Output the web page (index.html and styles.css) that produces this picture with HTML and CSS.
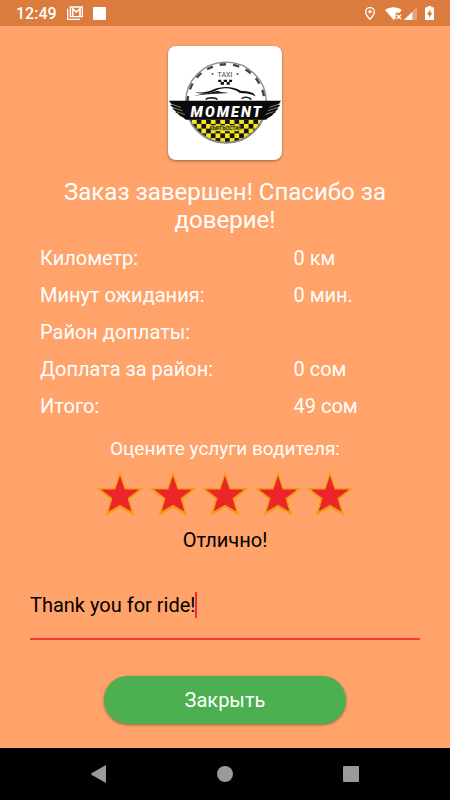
FILE: index.html
```html
<!DOCTYPE html>
<html lang="ru">
  <head>
    <meta charset="UTF-8" />
    <meta name="viewport" content="width=device-width, initial-scale=1.0" />
    <title>Заказ завершен</title>
    <link rel="stylesheet" href="styles.css">
  </head>

  <body>
    <header class="status-bar">
      <div class="status-group">
        <span class="clock">12:49</span>
        <!-- mail -->
        <svg class="mail-icon" viewBox="0 0 48 42" fill="none" stroke="#fff">
          <path d="M2 8v32h37" stroke-width="4" />
          <path d="M10 3h36v29H10z" stroke-width="4" />
          <path d="M17 32V8l11 10L39 8v24" stroke-width="5" />
        </svg>
        <span class="square-icon"></span>
      </div>
      <div class="status-group status-right">
        <!-- location -->
        <svg class="pin-icon" viewBox="0 0 30 39">
          <path d="M15 2C8 2 2 7 2 14c0 9 13 23 13 23s13-14 13-23C28 7 22 2 15 2z" fill="none" stroke="#fff" stroke-width="4" />
          <circle cx="15" cy="14" r="5" fill="#fff" />
        </svg>
        <!-- wifi -->
        <svg class="wifi-icon" viewBox="0 0 51 39">
          <path d="M0 9C14-2 37-2 50 9L44 17H32v17l-6 5z" fill="#fff" />
          <path d="M35 23l13 13M48 23L35 36" stroke="#fff" stroke-width="4" />
        </svg>
        <!-- signal -->
        <svg class="signal-icon" viewBox="0 0 39 39">
          <path d="M0 39L39 0v39z" fill="#fff" fill-opacity=".3" />
          <path d="M0 39l25-25v25z" fill="#fff" />
        </svg>
        <!-- battery -->
        <svg class="battery-icon" viewBox="0 0 27 42">
          <path d="M8 0h11v4h6q2 0 2 2v34q0 2-2 2H2q-2 0-2-2V6q0-2 2-2h6z" fill="#fff" />
          <path d="M16 9L6 26h6v11l10-17h-6z" fill="#db7b3e" />
        </svg>
      </div>
    </header>

    <main class="content">
      <svg class="logo" viewBox="25 25 338 338" role="img" aria-label="Taxi Moment">
        <defs>
          <pattern id="checks" x="96" y="242" width="28" height="28" patternUnits="userSpaceOnUse">
            <rect width="28" height="28" fill="#f7e71c" />
            <path d="M14 0h14v14H14zM0 14h14v14H0z" fill="#151515" />
          </pattern>
        </defs>
        <!-- wheel -->
        <circle cx="197" cy="193" r="120" fill="none" stroke="#888" stroke-width="4" />
        <circle cx="197" cy="193" r="114" fill="none" stroke="#444" stroke-width="7" stroke-dasharray="19 20.800" />
        <path d="M89 242a119 119 0 0 0 216 0z" fill="url(#checks)" stroke="#888" stroke-width="4" />
        <path d="M152 260h88v18h-88z" fill="#d8cc22" />
        <text class="logo-city" x="196" y="274" text-anchor="middle">КЫРГЫЗСТАН</text>
        <!-- car -->
        <text class="logo-taxi" x="194" y="116" text-anchor="middle">TAXI</text>
        <circle cx="157" cy="108" r="3" fill="#555" />
        <circle cx="231" cy="108" r="3" fill="#555" />
        <path d="M174 125h9v7h-9zM190 125h10v7h-10zM206 125h9v7h-9zM181 132h10v8h-10zM199 132h9v8h-9z" fill="#111" />
        <path d="M105 162c22 2 36 0 53-7 23-11 60-12 82 3 25 2 42 5 44 16-12-8-28-10-46-10-22-17-54-18-76-5-17 8-37 10-57 3z" fill="#111" />
        <path d="M100 173c25-7 47-7 72-15 12 5 20 5 33 6-29 2-65 3-105 9z" fill="#222" />
        <path d="M137 184c5-7 31-7 34 0M244 182c4-7 21-7 28 2" fill="none" stroke="#222" stroke-width="5" />
        <!-- wings -->
        <path d="M28 187h332l-8 13h6l-10 10h5l-11 10h4l-12 9h3l-14 9-8 6H78l-7-6-16-9h4l-14-9h5l-13-10h6l-12-10h6z" fill="#0b0b0b" />
        <path d="M31 196l32 11M40 208l28 9M51 220l24 8M358 196l-32 11M349 208l-28 9M338 220l-24 8" stroke="#bbb" stroke-width="2" />
        <text class="logo-name" x="200" y="235" text-anchor="middle">MOMENT</text>
      </svg>

      <h1 class="title">Заказ завершен! Спасибо за доверие!</h1>

      <table class="summary">
        <tr>
          <th scope="row">Километр:</th>
          <td>0 км</td>
        </tr>
        <tr>
          <th scope="row">Минут ожидания:</th>
          <td>0 мин.</td>
        </tr>
        <tr>
          <th scope="row">Район доплаты:</th>
          <td></td>
        </tr>
        <tr>
          <th scope="row">Доплата за район:</th>
          <td>0 сом</td>
        </tr>
        <tr>
          <th scope="row">Итого:</th>
          <td>49 сом</td>
        </tr>
      </table>

      <svg width="0" height="0" class="sprite">
        <symbol id="star" viewBox="0 0 48 48">
          <path d="M24 1.500L29.500 18.300H47.500L33.300 29.300 38.500 46 24 37.500 9.500 46l5.200-16.700L.5 18.300h18z" fill="#f39c12" />
          <path d="M24 6l4.700 13.500h14.300L31.500 28.200l3.900 13.300L24 34.800 12.600 41.500l3.900-13.300L5 19.500h14.300z" fill="#ec2528" />
        </symbol>
      </svg>

      <fieldset class="rating">
        <legend>Оцените услуги водителя:</legend>
        <div class="stars">
          <label class="star">
            <input type="radio" name="rating" value="1" aria-label="1" />
            <svg><use href="#star" /></svg>
          </label>
          <label class="star">
            <input type="radio" name="rating" value="2" aria-label="2" />
            <svg><use href="#star" /></svg>
          </label>
          <label class="star">
            <input type="radio" name="rating" value="3" aria-label="3" />
            <svg><use href="#star" /></svg>
          </label>
          <label class="star">
            <input type="radio" name="rating" value="4" aria-label="4" />
            <svg><use href="#star" /></svg>
          </label>
          <label class="star">
            <input type="radio" name="rating" value="5" aria-label="5" checked />
            <svg><use href="#star" /></svg>
          </label>
        </div>
        <p class="rating-text">Отлично!</p>
      </fieldset>

      <label class="comment">
        <input type="text" value="Thank you for ride!" aria-label="Комментарий" />
        <span class="caret"></span>
      </label>

      <button class="close-btn" type="button">Закрыть</button>
    </main>

    <nav class="nav-bar">
      <button type="button" aria-label="Назад">
        <svg viewBox="0 0 18 18"><path d="M16 1v16q0 1-1 .5L1.500 9.700q-1-.7 0-1.400L15 .500q1-.5 1 .5z" /></svg>
      </button>
      <button type="button" aria-label="Домой">
        <svg viewBox="0 0 18 18"><circle cx="9" cy="9" r="8" /></svg>
      </button>
      <button type="button" aria-label="Недавние">
        <svg viewBox="0 0 18 18"><rect x="1" y="1" width="16" height="16" rx="1" /></svg>
      </button>
    </nav>
  </body>
</html>
```

FILE: styles.css
```css
* {
  box-sizing: border-box;
  font-family: Roboto, "Noto Sans", sans-serif;
}

body {
  display: flex;
  flex-direction: column;
  min-height: 100vh;
  margin: 0;
  background-color: #ffa36a;
  color: white;
  font-size: 20px;
  line-height: 24px;
}

/* system status bar */
.status-bar {
  display: flex;
  justify-content: space-between;
  align-items: center;
  height: 26px;
  padding: 0 16px;
  background-color: #db7b3e;
}

.status-group {
  display: flex;
  align-items: center;
  gap: 10px;
}

.status-right {
  gap: 2px;
}

.clock {
  padding-top: 2px;
  font-size: 16px;
  font-weight: 500;
}

.mail-icon {
  width: 16px;
  height: 14px;
}

.square-icon {
  width: 13px;
  height: 13px;
  border-radius: 1px;
  background-color: white;
}

.pin-icon {
  width: 10px;
  height: 13px;
  margin-right: 8px;
}

.wifi-icon {
  width: 17px;
  height: 13px;
}

.signal-icon {
  width: 13px;
  height: 13px;
}

.battery-icon {
  width: 9px;
  height: 14px;
  margin-left: 6px;
}

/* page */
.content {
  display: flex;
  flex: 1;
  flex-direction: column;
  align-items: center;
  padding: 20px 30px 24px;
}

.logo {
  width: 114px;
  height: 114px;
  border-radius: 8px;
  background-color: white;
  box-shadow: 0 1px 3px rgba(0, 0, 0, 0.4);
}

.logo-taxi {
  fill: #444;
  font-size: 21px;
}

.logo-name {
  fill: white;
  font-size: 43px;
  font-style: italic;
  font-weight: 900;
  letter-spacing: 6px;
}

.logo-city {
  fill: #222;
  font-size: 14px;
  font-weight: 700;
}

.title {
  margin: 18px 0 5px;
  font-size: 24px;
  font-weight: 400;
  line-height: 28px;
  text-align: center;
}

.summary {
  width: 100%;
  border-collapse: collapse;
  table-layout: fixed;
}

.summary th,
.summary td {
  height: 37px;
  padding: 0 10px;
  font-weight: 400;
  text-align: left;
}

.summary th {
  width: 65%;
}

.sprite {
  position: absolute;
}

.rating {
  width: 258px;
  margin: 13px 0 0;
  padding: 0;
  border: 0;
  text-align: center;
}

.rating legend {
  width: 100%;
  padding: 0;
  font-size: 19px;
}

.stars {
  display: flex;
  justify-content: space-between;
  margin: 9px 0 10px;
}

.star {
  position: relative;
  width: 48px;
  height: 48px;
  cursor: pointer;
}

.star input {
  position: absolute;
  inset: 0;
  margin: 0;
  opacity: 0;
}

.star svg {
  display: block;
  width: 100%;
  height: 100%;
}

.rating-text {
  margin: 0;
  color: black;
}

.comment {
  display: flex;
  align-items: center;
  width: 100%;
  height: 72px;
  margin-top: 16px;
  padding-top: 4px;
  border-bottom: 2px solid #fa3a34;
}

.comment input {
  field-sizing: content;
  padding: 0;
  border: 0;
  outline: 0;
  background: none;
  color: black;
  font-size: 20px;
}

.caret {
  width: 2px;
  height: 26px;
  background-color: #fa2a2a;
}

.close-btn {
  width: 62%;
  height: 48px;
  margin-top: auto;
  border: 0;
  border-radius: 24px;
  background-color: #4caf50;
  color: white;
  font-size: 20px;
  box-shadow: 0 1px 3px rgba(0, 0, 0, 0.4);
  cursor: pointer;
}

/* system navigation */
.nav-bar {
  display: flex;
  justify-content: space-between;
  align-items: center;
  height: 52px;
  padding: 0 20%;
  background-color: black;
}

.nav-bar button {
  display: flex;
  padding: 0;
  border: 0;
  background: none;
}

.nav-bar svg {
  width: 18px;
  height: 18px;
  fill: #9a9a9a;
}
```
